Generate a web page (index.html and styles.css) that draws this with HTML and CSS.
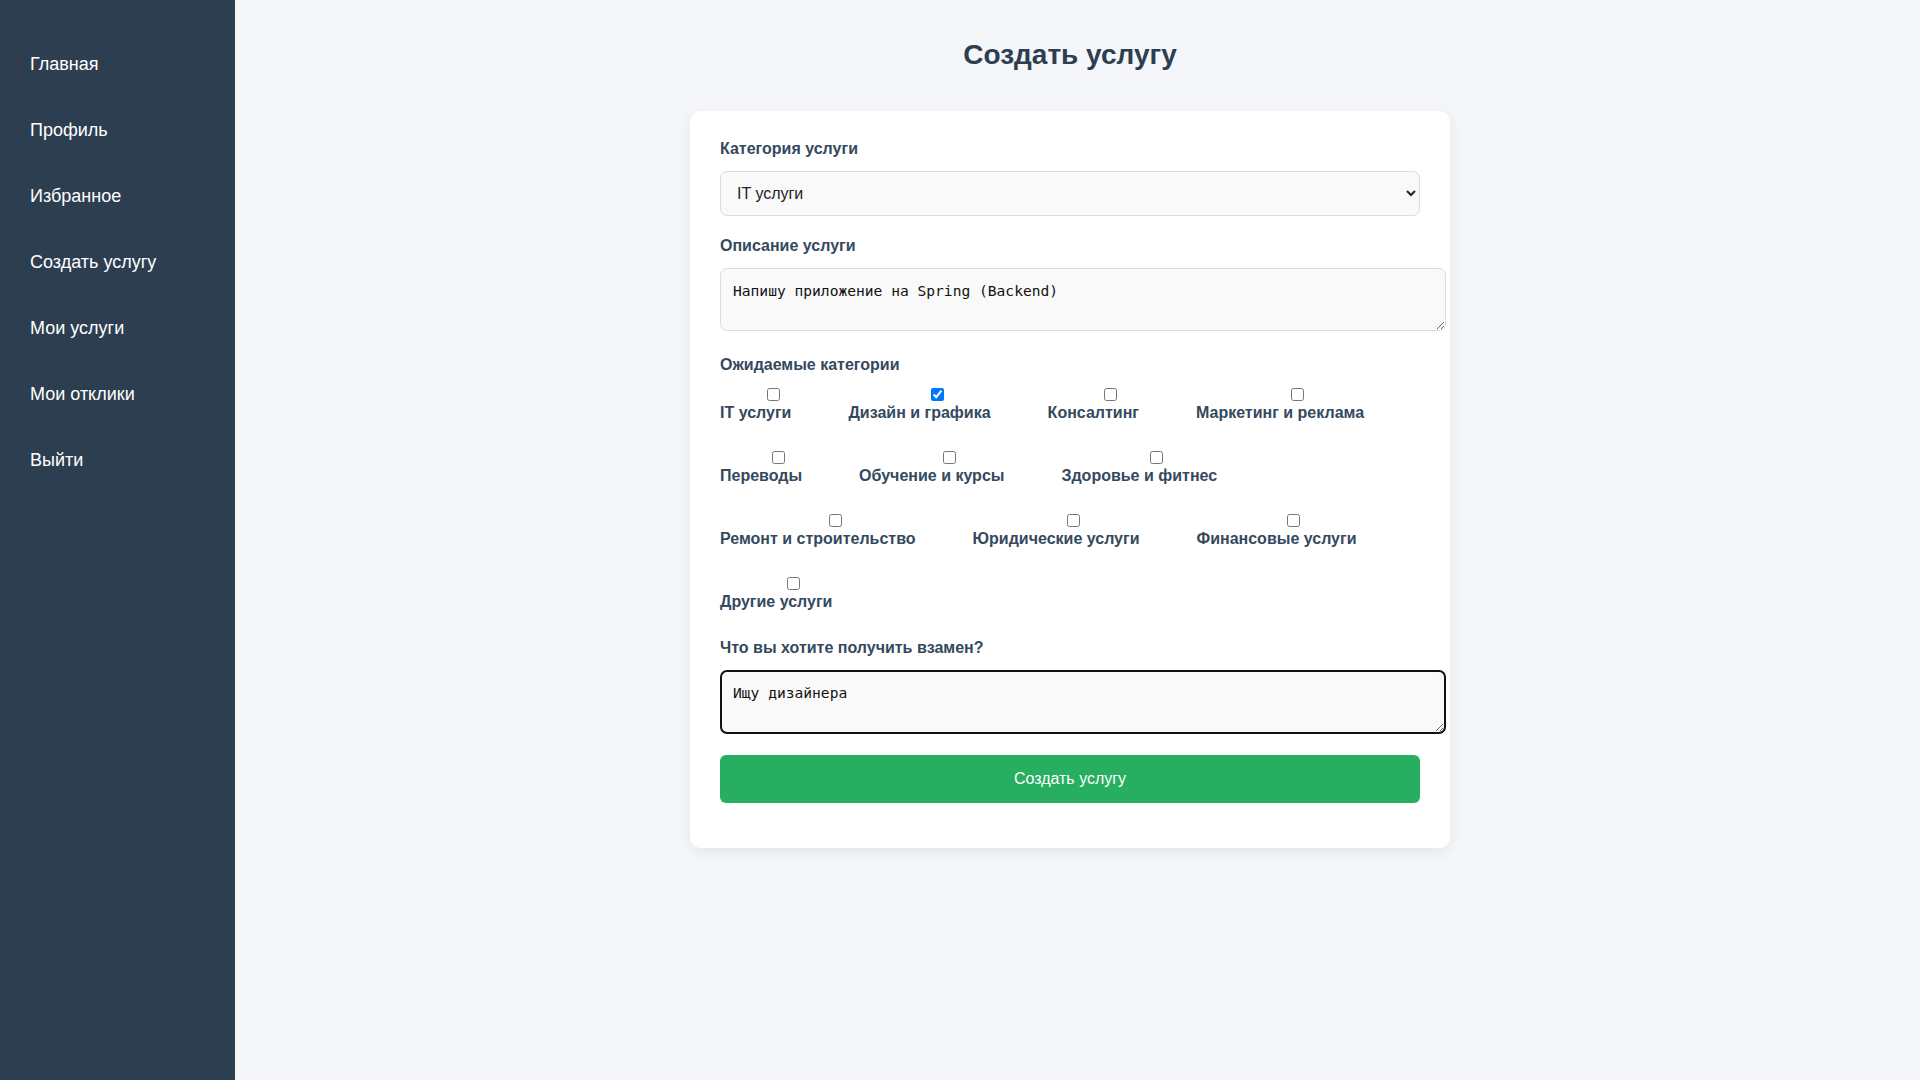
FILE: index.html
```html
<!DOCTYPE html>
<html lang="ru">
<head>
<meta charset="utf-8">
<title>Создать услугу</title>
<link rel="stylesheet" href="styles.css">
</head>
<body>
<aside class="sidebar">
  <nav class="nav">
    <a class="nav-link" href="#">Главная</a>
    <a class="nav-link" href="#">Профиль</a>
    <a class="nav-link" href="#">Избранное</a>
    <a class="nav-link" href="#">Создать услугу</a>
    <a class="nav-link" href="#">Мои услуги</a>
    <a class="nav-link" href="#">Мои отклики</a>
    <a class="nav-link" href="#">Выйти</a>
  </nav>
</aside>
<main class="main">
  <h1 class="page-title">Создать услугу</h1>
  <form class="card">
    <div class="group">
      <label class="field-label" for="cat">Категория услуги</label>
      <select id="cat" class="select">
        <option>IT услуги</option>
        <option>Дизайн и графика</option>
        <option>Консалтинг</option>
      </select>
    </div>
    <div class="group group-text">
      <label class="field-label" for="desc">Описание услуги</label>
      <textarea id="desc" class="textarea">Напишу приложение на Spring (Backend)</textarea>
    </div>
    <div class="group group-checks">
      <div class="field-label field-label-checks">Ожидаемые категории</div>
      <div class="checks">
        <label class="check-item"><input type="checkbox" class="check"><span class="check-text">IT услуги</span></label>
        <label class="check-item"><input type="checkbox" class="check" checked><span class="check-text">Дизайн и графика</span></label>
        <label class="check-item"><input type="checkbox" class="check"><span class="check-text">Консалтинг</span></label>
        <label class="check-item"><input type="checkbox" class="check"><span class="check-text">Маркетинг и реклама</span></label>
        <label class="check-item"><input type="checkbox" class="check"><span class="check-text">Переводы</span></label>
        <label class="check-item"><input type="checkbox" class="check"><span class="check-text">Обучение и курсы</span></label>
        <label class="check-item"><input type="checkbox" class="check"><span class="check-text">Здоровье и фитнес</span></label>
        <label class="check-item"><input type="checkbox" class="check"><span class="check-text">Ремонт и строительство</span></label>
        <label class="check-item"><input type="checkbox" class="check"><span class="check-text">Юридические услуги</span></label>
        <label class="check-item"><input type="checkbox" class="check"><span class="check-text">Финансовые услуги</span></label>
        <label class="check-item"><input type="checkbox" class="check"><span class="check-text">Другие услуги</span></label>
      </div>
    </div>
    <div class="group">
      <label class="field-label" for="want">Что вы хотите получить взамен?</label>
      <textarea id="want" class="textarea textarea-focused">Ищу дизайнера</textarea>
    </div>
    <button type="button" class="submit">Создать услугу</button>
  </form>
</main>
</body>
</html>
```
FILE: styles.css
```css
* { box-sizing: border-box; }
html, body { margin: 0; padding: 0; }
body {
  display: flex;
  min-height: 1080px;
  font-family: "Liberation Sans", Arial, sans-serif;
  background: #f4f6f9;
}
.sidebar {
  width: 235px;
  flex-shrink: 0;
  background: #2c3e50;
  padding-top: 31px;
}
.nav { display: flex; flex-direction: column; }
.nav-link {
  display: block;
  padding: 23px 30px;
  line-height: 20px;
  font-size: 18px;
  color: #ffffff;
  text-decoration: none;
}
.main {
  flex: 1;
  display: flex;
  flex-direction: column;
  align-items: center;
  padding: 0 35px 0 20px;
}
.page-title {
  margin: 38px 0 40px;
  font-size: 28px;
  line-height: 33px;
  font-weight: bold;
  color: #2c3e50;
}
.card {
  width: 760px;
  background: #ffffff;
  border-radius: 10px;
  padding: 29px 30px 30px;
  box-shadow: 0 4px 14px rgba(0, 0, 0, 0.07);
}
.group { margin-bottom: 21px; }
.group-text { margin-bottom: 25px; }
.field-label {
  display: block;
  font-size: 16px;
  line-height: 18px;
  font-weight: bold;
  color: #34495e;
  margin-bottom: 13px;
}
.field-label-checks { margin-bottom: 11px; }
.group-checks { margin-bottom: 28px; }
.select {
  display: block;
  width: 100%;
  height: 45px;
  padding: 0 10px 0 12px;
  font-family: "Liberation Sans", Arial, sans-serif;
  font-size: 16px;
  color: #222;
  background: #f9f9f9;
  border: 1px solid #dcdcdc;
  border-radius: 7px;
}
.textarea {
  display: block;
  box-sizing: content-box;
  width: 100%;
  height: 36px;
  padding: 13px 12px 12px;
  margin: 0;
  font-family: "DejaVu Sans Mono", monospace;
  font-size: 14.6px;
  color: #111;
  background: #f9f9f9;
  border: 1px solid #dcdcdc;
  border-radius: 7px;
  resize: vertical;
}
.textarea-focused {
  border: 2px solid #111111;
  padding: 12px 11px 11px;
  height: 37px;
}
.checks {
  display: flex;
  flex-wrap: wrap;
  column-gap: 22px;
  row-gap: 26px;
}
.check-item {
  display: flex;
  flex-direction: column;
  align-items: center;
  cursor: pointer;
}
.check {
  width: 13px;
  height: 13px;
  margin: 3px;
}
.check-text {
  align-self: flex-start;
  padding-right: 35px;
  font-size: 16px;
  line-height: 18px;
  font-weight: bold;
  color: #34495e;
  white-space: nowrap;
}
.submit {
  display: block;
  width: 700px;
  height: 48px;
  margin: 18px 0 15px;
  border: none;
  border-radius: 6px;
  background: #27ae60;
  color: #ffffff;
  font-family: "Liberation Sans", Arial, sans-serif;
  font-size: 16px;
  cursor: pointer;
}
```
